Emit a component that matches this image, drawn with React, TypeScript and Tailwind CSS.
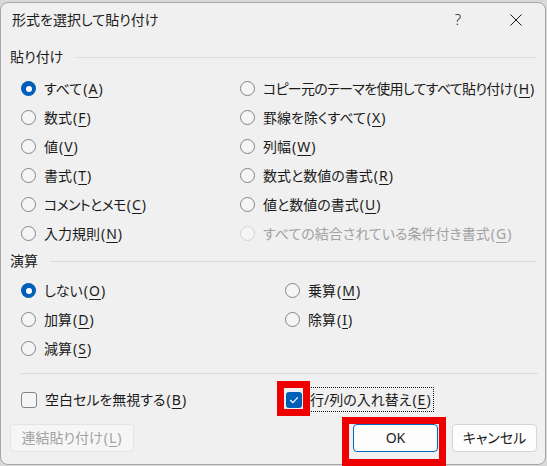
import clsx from 'clsx';

type Opt = { label: string; key: string; checked?: boolean; disabled?: boolean; tight?: boolean };

const pasteOptions: Opt[] = [
  { label: 'すべて', key: 'A', checked: true },
  { label: 'コピー元のテーマを使用してすべて貼り付け', key: 'H', tight: true },
  { label: '数式', key: 'F' },
  { label: '罫線を除くすべて', key: 'X' },
  { label: '値', key: 'V' },
  { label: '列幅', key: 'W' },
  { label: '書式', key: 'T' },
  { label: '数式と数値の書式', key: 'R' },
  { label: 'コメントとメモ', key: 'C', tight: true },
  { label: '値と数値の書式', key: 'U' },
  { label: '入力規則', key: 'N' },
  { label: 'すべての結合されている条件付き書式', key: 'G', disabled: true },
];

const opOptions: Opt[] = [
  { label: 'しない', key: 'O', checked: true },
  { label: '乗算', key: 'M' },
  { label: '加算', key: 'D' },
  { label: '除算', key: 'I' },
  { label: '減算', key: 'S' },
];

function Label({ label, k, tight }: { label: string; k: string; tight?: boolean }) {
  return (
    <span className="whitespace-nowrap">
      <span className={clsx(tight && 'tracking-[-0.7px]')}>{label}</span>
      <span className="pl-[1px] tracking-[1px]">
        (<span className="underline underline-offset-[3px]">{k}</span>)
      </span>
    </span>
  );
}

function Radio({ checked, disabled }: { checked?: boolean; disabled?: boolean }) {
  if (checked) {
    return (
      <span className="flex h-[15px] w-[15px] shrink-0 items-center justify-center rounded-full bg-[#005fb8]">
        <span className="h-[6px] w-[6px] rounded-full bg-white" />
      </span>
    );
  }
  return (
    <span
      className={clsx(
        'h-[15px] w-[15px] shrink-0 rounded-full border bg-[#f5f5f5]',
        disabled ? 'border-[#d2d2d2]' : 'border-[#858585]'
      )}
    />
  );
}

function Checkbox({ checked }: { checked?: boolean }) {
  if (checked) {
    return (
      <span className="flex h-[16px] w-[16px] shrink-0 items-center justify-center rounded-[3px] bg-[#005fb8]">
        <svg width="12" height="12" viewBox="0 0 12 12" fill="none">
          <polyline points="2.5,6.3 5,8.7 9.5,3.6" stroke="white" strokeWidth="1.2" strokeLinecap="round" strokeLinejoin="round" />
        </svg>
      </span>
    );
  }
  return <span className="h-[16px] w-[16px] shrink-0 rounded-[3px] border border-[#858585] bg-[#f5f5f5]" />;
}

function Option({ opt }: { opt: Opt }) {
  return (
    <div className={clsx('flex h-[29px] items-center gap-2', opt.disabled && 'text-[#a2a2a2]')}>
      <Radio checked={opt.checked} disabled={opt.disabled} />
      <Label label={opt.label} k={opt.key} tight={opt.tight} />
    </div>
  );
}

function SectionHeader({ title, className }: { title: string; className?: string }) {
  return (
    <div className={clsx('flex h-[22px] items-center gap-3 pl-[9px] pr-[8px]', className)}>
      <span>{title}</span>
      <div className="h-px flex-1 bg-[#dcdcdc]" />
    </div>
  );
}

export default function App() {
  return (
    <div className="relative h-[466px] w-[547px] overflow-hidden bg-[#d9d9d9] font-['Noto_Sans','Noto_Sans_CJK_JP',sans-serif] text-[14px] leading-none text-[#1b1b1b] [font-feature-settings:'palt']">
      <div className="mt-[2px] flex h-[463px] w-[546px] flex-col rounded-[8px] border border-[#a6a6a6] bg-[#f0f0f0]">
        {/* title bar */}
        <div className="flex h-[33px] shrink-0 items-center pl-[11px]">
          <span>形式を選択して貼り付け</span>
          <span className="ml-auto flex w-[58px] justify-center text-[15px] font-light">?</span>
          <span className="flex w-[58px] justify-center">
            <svg width="12" height="12" viewBox="0 0 12 12">
              <path d="M0.5 0.5 L11.5 11.5 M11.5 0.5 L0.5 11.5" stroke="#1b1b1b" strokeWidth="1" />
            </svg>
          </span>
        </div>

        <SectionHeader title="貼り付け" className="mt-[10px]" />
        <div className="mt-[6px] grid grid-cols-[219px_1fr] pl-[20px]">
          {pasteOptions.map((o) => (
            <Option key={o.key} opt={o} />
          ))}
        </div>

        <SectionHeader title="演算" className="mt-[2px]" />
        <div className="mt-[4px] grid grid-cols-[264px_1fr] pl-[20px]">
          {opOptions.map((o) => (
            <Option key={o.key} opt={o} />
          ))}
        </div>

        <div className="ml-[19px] mr-[7px] mt-[10px] h-px bg-[#dcdcdc]" />

        <div className="mt-[11px] grid h-[29px] grid-cols-[265px_1fr] items-center pl-[20px]">
          <div className="flex items-center gap-2">
            <Checkbox />
            <Label label="空白セルを無視する" k="B" />
          </div>
          <div className="flex items-center gap-[6px]">
            <Checkbox checked />
            <span className="flex h-[25px] items-center border border-dotted border-[#1b1b1b] px-[1px]">
              <Label label="行/列の入れ替え" k="E" />
            </span>
          </div>
        </div>

        <div className="mt-[10px] flex items-center pl-[9px] pr-[8px]">
          <button className="flex h-[28px] w-[124px] items-center justify-center rounded-[4px] border border-[#e3e3e3] bg-[#f6f6f6] text-[#a2a2a2]">
            <Label label="連結貼り付け" k="L" />
          </button>
          <button className="ml-auto flex h-[28px] w-[85px] items-center justify-center rounded-[4px] border border-[#0067c0] bg-[#fdfdfd]">
            OK
          </button>
          <button className="ml-[14px] flex h-[28px] w-[85px] items-center justify-center rounded-[4px] border border-[#d5d5d5] bg-[#fdfdfd]">
            キャンセル
          </button>
        </div>
      </div>

      {/* red highlight annotations */}
      <div className="absolute left-[277px] top-[381px] h-[35px] w-[33px] border-[7px] border-[#ee0000]" />
      <div className="absolute left-[342px] top-[417px] h-[49px] w-[104px] border-[7px] border-[#ee0000]" />
    </div>
  );
}
